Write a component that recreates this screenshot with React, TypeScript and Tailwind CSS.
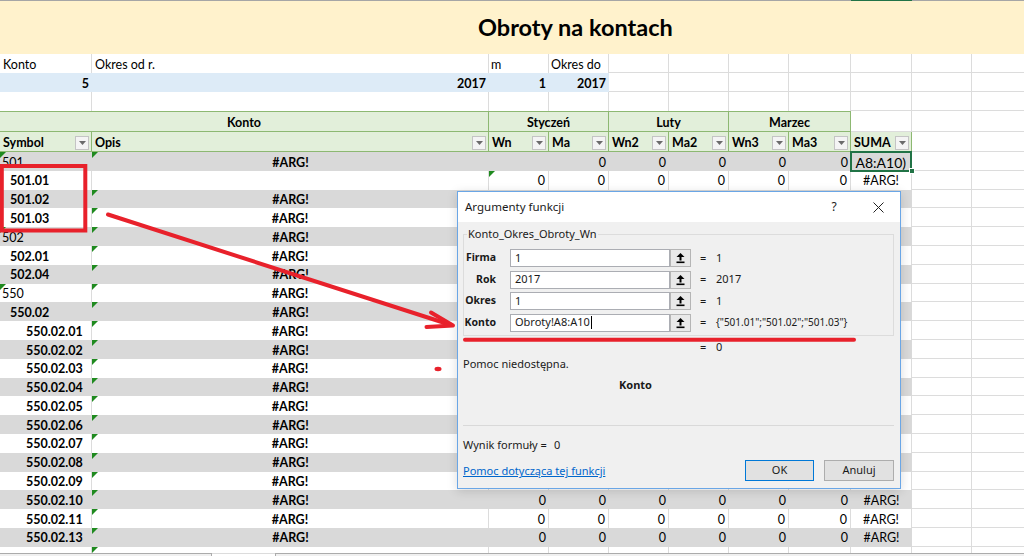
import React from "react";

const COLW = [
  "w-[92px]",
  "w-[397px]",
  "w-[60px]",
  "w-[60px]",
  "w-[60px]",
  "w-[60px]",
  "w-[60px]",
  "w-[62px]",
  "w-[61px]",
  "w-[60px]",
  "w-[60px]",
];

const grid = "border-r border-b border-[#DCDCDC]";
const gridR = "border-r border-[#DCDCDC]";
const hdr = "bg-[#E2EFDA] border-r border-b border-[#8DB872]";

type Row = {
  s: string;
  l: 1 | 2 | 3;
  ta?: boolean;
  tb?: boolean;
  tc?: boolean;
  arg?: boolean;
  c?: string;
  sel?: boolean;
  empty?: boolean;
};

const rows: Row[] = [
  { s: "501", l: 1, ta: true, tb: true, arg: true, c: "", sel: true },
  { s: "501.01", l: 2, tc: true },
  { s: "501.02", l: 2, tb: true, arg: true },
  { s: "501.03", l: 2, tb: true, arg: true },
  { s: "502", l: 1, ta: true, tb: true, arg: true },
  { s: "502.01", l: 2, tb: true, arg: true },
  { s: "502.04", l: 2, tb: true, arg: true },
  { s: "550", l: 1, ta: true, tb: true, arg: true },
  { s: "550.02", l: 2, tb: true, arg: true },
  ...["01", "02", "03", "04", "05", "06", "07", "08", "09", "10", "11", "13"].map(
    (n): Row => ({ s: `550.02.${n}`, l: 3, tb: true, arg: true })
  ),
  { s: "", l: 3, tb: true, arg: false, empty: true },
];

const lvl = {
  1: "pl-[2px] font-normal",
  2: "pl-[10px] font-bold",
  3: "pl-[26px] font-bold",
};

function C({ w, cls, children }: { w: string; cls?: string; children?: React.ReactNode }) {
  return (
    <div className={`relative flex h-full shrink-0 items-center whitespace-nowrap pt-[3px] ${w} ${cls ?? ""}`}>
      {children}
    </div>
  );
}

function Tri() {
  return (
    <svg className="absolute left-0 top-0" width="6" height="6" viewBox="0 0 6 6">
      <polygon points="0,0 6,0 0,6" fill="#1F8A1F" />
    </svg>
  );
}

function Drop() {
  return (
    <span className="-mt-[1px] flex h-[14px] w-[14px] items-center justify-center border border-[#C4C4C4] bg-[#F4F4F4]">
      <svg width="7" height="4" viewBox="0 0 7 4">
        <polygon points="0,0 7,0 3.5,4" fill="#6B6B6B" />
      </svg>
    </span>
  );
}

function UpIcon() {
  return (
    <svg width="19" height="16" viewBox="0 0 19 16">
      <polygon points="5.5,7 9.5,3 13.5,7" fill="#000" />
      <rect x="8.5" y="6.5" width="2" height="4" fill="#000" />
      <rect x="5.5" y="11.5" width="8" height="1.6" fill="#000" />
    </svg>
  );
}

function DataRow({ r, idx }: { r: Row; idx: number }) {
  const gray = idx % 2 === 0;
  const base = gray ? "bg-[#D9D9D9]" : gridR;
  const zero = (i: number) => (
    <C w={COLW[i]} cls={`${base} justify-end pr-[3px]`}>
      {r.empty ? "" : "0"}
    </C>
  );
  return (
    <div className="flex h-[18.8px]">
      <C w={COLW[0]} cls={`${base} ${lvl[r.l]}`}>
        {r.ta && <Tri />}
        {r.s}
      </C>
      <C w={COLW[1]} cls={`${base} justify-center font-bold`}>
        {r.tb && <Tri />}
        {r.arg ? "#ARG!" : ""}
      </C>
      <C w={COLW[2]} cls={`${base} justify-end pr-[3px]`}>
        {r.tc && <Tri />}
        {r.empty ? "" : r.c ?? "0"}
      </C>
      {zero(3)}
      {zero(4)}
      {zero(5)}
      {zero(6)}
      {zero(7)}
      {r.sel ? (
        <C w={COLW[8]} cls={base}>
          <div className="flex w-full justify-end overflow-hidden pr-[6px]">
            <span className="whitespace-nowrap text-[14px]">A8:A10)</span>
          </div>
          <div className="absolute -bottom-[1px] -left-[1px] -top-[1px] right-0 z-10 border-2 border-[#217346]" />
          <div className="absolute -bottom-[3px] -right-[3px] z-10 h-[6px] w-[6px] border border-white bg-[#217346]" />
        </C>
      ) : (
        <C w={COLW[8]} cls={`${base} justify-center`}>
          {r.s ? "#ARG!" : ""}
        </C>
      )}
      <C w={COLW[9]} cls={grid} />
      <C w={COLW[10]} cls={grid} />
    </div>
  );
}

function Dialog() {
  const args = [
    ["Firma", "1", "1"],
    ["Rok", "2017", "2017"],
    ["Okres", "1", "1"],
    ["Konto", "Obroty!A8:A10", '{"501.01";"501.02";"501.03"}'],
  ];
  return (
    <div className="absolute left-[457px] top-[191px] z-20 flex h-[298px] w-[444px] flex-col border border-[#6AA6E6] bg-[#F0F0F0] font-['Noto_Sans',sans-serif] text-[11px] text-[#1a1a1a] shadow-[0_2px_10px_rgba(0,0,0,0.15)]">
      <div className="flex h-[30px] shrink-0 items-center bg-white pl-[7px]">
        <span className="text-[11.5px]">Argumenty funkcji</span>
        <span className="ml-auto w-[10px] text-center text-[12px]">?</span>
        <svg className="ml-[34px] mr-[16px]" width="11" height="11" viewBox="0 0 11 11">
          <path d="M0.5 0.5L10.5 10.5M10.5 0.5L0.5 10.5" stroke="#222" strokeWidth="1" />
        </svg>
      </div>
      <div className="flex flex-1 flex-col pl-[5px] pr-[6px]">
        <fieldset className="mt-[4px] border border-[#DCDCDC] pb-[3.5px]">
          <legend className="ml-[3px] px-[1px] leading-[16px]">Konto_Okres_Obroty_Wn</legend>
          <div className="flex flex-col gap-[3.5px] pt-[7px]">
            {args.map(([label, input, val], i) => (
              <div key={label} className="flex h-[18px] items-center">
                <span className="w-[32px] text-right text-[10.5px] font-bold">{label}</span>
                <div className="ml-[14px] flex h-full w-[160px] items-center border border-[#ABADB3] bg-white pl-[4px]">
                  {input}
                  {i === 3 && <span className="ml-[1px] h-[13px] w-px bg-black" />}
                </div>
                <div className="flex h-full w-[21px] items-center justify-center border border-[#B5B5B5] bg-[#E9E9E9]">
                  <UpIcon />
                </div>
                <span className="ml-[9px] w-[16px]">=</span>
                <span className={i === 3 ? "text-[10px]" : ""}>{val}</span>
              </div>
            ))}
          </div>
        </fieldset>
        <div className="mt-[4px] flex h-[14px] items-center">
          <span className="ml-[237px] w-[16px]">=</span>
          <span>0</span>
        </div>
        <div className="mt-[3px] h-[14px] leading-[14px]">Pomoc niedostępna.</div>
        <div className="mt-[7px] h-[14px] pl-[156px] font-bold leading-[14px]">Konto</div>
        <div className="mt-[33px] h-px bg-[#D9D9D9]" />
        <div className="mt-[12px] flex h-[14px] items-center">
          <span>Wynik formuły =</span>
          <span className="ml-[7px]">0</span>
        </div>
        <div className="mt-[8px] flex items-center">
          <a className="mt-[2px] text-[#0066CC] underline">Pomoc dotycząca tej funkcji</a>
          <button className="ml-auto h-[21px] w-[69px] border border-[#0078D7] bg-[#E1E1E1]">OK</button>
          <button className="ml-[10px] h-[21px] w-[70px] border border-[#ADADAD] bg-[#E1E1E1]">Anuluj</button>
        </div>
      </div>
    </div>
  );
}

export default function App() {
  return (
    <div className="relative h-[556px] w-[1024px] overflow-hidden bg-white font-['Lato',sans-serif] text-[12.5px] text-black">
      <div className="flex h-full flex-col">
        <div className="flex-1 overflow-hidden">
          <div className="flex h-px">
            <div className="w-[851px] shrink-0 bg-[#A6A6A6]" />
            <div className="w-[61px] shrink-0 bg-[#217346]" />
            <div className="flex-1 bg-[#A6A6A6]" />
          </div>
          <div className="flex h-[53px] items-center bg-[#FFF2CC] pl-[478px] pt-[1px]">
            <span className="whitespace-nowrap text-[23.5px] font-bold">Obroty na kontach</span>
          </div>

          <div className="flex h-[19px]">
            <C w={COLW[0]} cls={`${gridR} pl-[3px]`}>Konto</C>
            <C w={COLW[1]} cls={`${gridR} pl-[3px]`}>Okres od r.</C>
            <C w={COLW[2]} cls={`${gridR} pl-[2px]`}>m</C>
            <C w={COLW[3]} cls={`${gridR} pl-[2px]`}>Okres do</C>
            {[4, 5, 6, 7, 8, 9, 10].map((i) => (
              <C key={i} w={COLW[i]} cls={grid} />
            ))}
          </div>
          <div className="flex h-[19px] font-bold">
            <C w={COLW[0]} cls="justify-end bg-[#DDEBF7] pr-[3px]">5</C>
            <C w={COLW[1]} cls="justify-end bg-[#DDEBF7] pr-[3px]">2017</C>
            <C w={COLW[2]} cls="justify-end bg-[#DDEBF7] pr-[3px]">1</C>
            <C w={COLW[3]} cls="justify-end bg-[#DDEBF7] pr-[3px]">2017</C>
            {[4, 5, 6, 7, 8, 9, 10].map((i) => (
              <C key={i} w={COLW[i]} cls={grid} />
            ))}
          </div>
          <div className="flex h-[19px]">
            {[0, 1, 2, 3, 4, 5, 6, 7].map((i) => (
              <C key={i} w={COLW[i]} cls={gridR} />
            ))}
            {[8, 9, 10].map((i) => (
              <C key={i} w={COLW[i]} cls={grid} />
            ))}
          </div>

          <div className="flex h-[21px] font-bold">
            <C w="w-[489px]" cls="justify-center border-b border-r border-t border-[#8DB872] bg-[#E2EFDA]">Konto</C>
            <C w="w-[120px]" cls="justify-center border-b border-r border-t border-[#8DB872] bg-[#E2EFDA]">Styczeń</C>
            <C w="w-[120px]" cls="justify-center border-b border-r border-t border-[#8DB872] bg-[#E2EFDA]">Luty</C>
            <C w="w-[122px]" cls="justify-center border-b border-r border-t border-[#8DB872] bg-[#E2EFDA]">Marzec</C>
            {[8, 9, 10].map((i) => (
              <C key={i} w={COLW[i]} cls={grid} />
            ))}
          </div>
          <div className="flex h-[20px] font-bold">
            {["Symbol", "Opis", "Wn", "Ma", "Wn2", "Ma2", "Wn3", "Ma3", "SUMA"].map((t, i) => (
              <C key={t} w={COLW[i]} cls={`${hdr} justify-between pl-[3px] pr-[2px]`}>
                <span>{t}</span>
                <Drop />
              </C>
            ))}
            <C w={COLW[9]} cls={grid} />
            <C w={COLW[10]} cls={grid} />
          </div>

          {rows.map((r, i) => (
            <DataRow key={i} r={r} idx={i} />
          ))}
        </div>
        <div className="flex h-[3px] shrink-0">
          <div className="w-[212px] shrink-0 border-r border-t border-[#ABABAB] bg-[#F0F0F0]" />
          <div className="w-[63px] shrink-0 border-t border-[#DCDCDC]" />
          <div className="flex-1 border-l border-t border-[#ABABAB] bg-[#F0F0F0]" />
        </div>
      </div>

      <Dialog />

      <svg className="pointer-events-none absolute left-0 top-0 z-30" width="1024" height="556" viewBox="0 0 1024 556">
        <rect x="1.8" y="166" width="83.5" height="64.5" fill="none" stroke="#E8212B" strokeWidth="4" />
        <path d="M108 214.5 L451 325" stroke="#E8212B" strokeWidth="4" strokeLinecap="round" />
        <path d="M431 312.5 L453 325.5 L426.5 327" fill="none" stroke="#E8212B" strokeWidth="4" strokeLinecap="round" strokeLinejoin="round" />
        <path d="M465 339.7 L854 339.7" stroke="#E8212B" strokeWidth="4" strokeLinecap="round" />
        <ellipse cx="438" cy="369" rx="3.5" ry="2.2" fill="#E8212B" />
      </svg>
    </div>
  );
}
